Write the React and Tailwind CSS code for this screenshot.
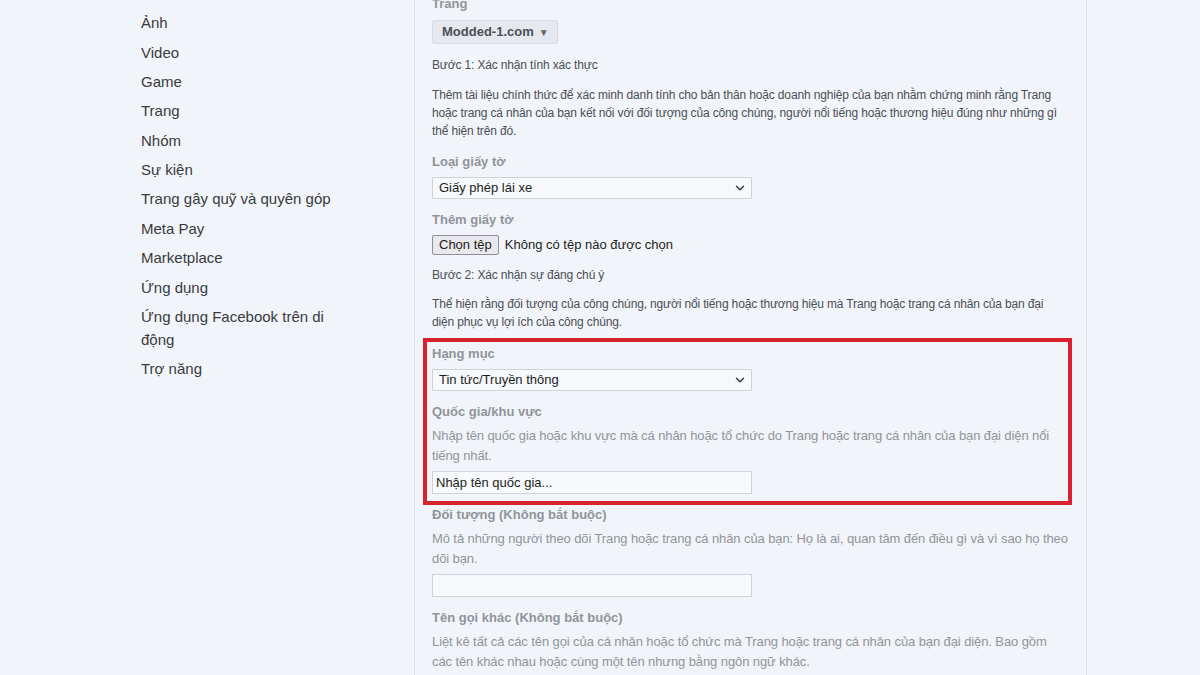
import { ChevronDown } from 'lucide-react';

const sideItems = [
  'Ảnh',
  'Video',
  'Game',
  'Trang',
  'Nhóm',
  'Sự kiện',
  'Trang gây quỹ và quyên góp',
  'Meta Pay',
  'Marketplace',
  'Ứng dụng',
  'Ứng dụng Facebook trên di động',
  'Trợ năng',
];

export default function App() {
  return (
    <div className="flex h-[675px] w-[1200px] overflow-hidden bg-[#f1f4f9] font-['Liberation_Sans',Arial,sans-serif]">
      <aside className="w-[414px] shrink-0 pl-[141px] pt-[8px]">
        <ul className="w-[200px] text-[15px] leading-[23px] text-[#3a3b3e]">
          {sideItems.map((item) => (
            <li key={item} className="py-[3.2px]">{item}</li>
          ))}
        </ul>
      </aside>

      <main className="w-[673px] shrink-0 border-x border-[#dde1e7] px-[17px]">
        <div className="-mt-[4px] w-[637px]">
          <Label>Trang</Label>
          <button className="mt-[8px] flex h-[24px] items-center gap-[5px] rounded-[2px] border border-[#dadde3] bg-[#e5e8ee] pl-[9px] pr-[8px] text-[13px] font-bold text-[#4b4f56]">
            Modded-1.com
            <span className="text-[10px] text-[#606770]">▼</span>
          </button>

          <p className="mt-[13px] text-[12px] leading-[16px] tracking-[-0.15px] text-[#4b4f56]">Bước 1: Xác nhận tính xác thực</p>
          <p className="mt-[13px] text-[12px] leading-[18px] tracking-[-0.15px] text-[#4b4f56]">
            Thêm tài liệu chính thức để xác minh danh tính cho bản thân hoặc doanh nghiệp của bạn nhằm chứng minh rằng Trang hoặc trang cá nhân của bạn kết nối với đối tượng của công chúng, người nổi tiếng hoặc thương hiệu đúng như những gì thể hiện trên đó.
          </p>

          <div className="mt-[14px]">
            <Label>Loại giấy tờ</Label>
            <Select value="Giấy phép lái xe" />
          </div>

          <div className="mt-[13px]">
            <Label>Thêm giấy tờ</Label>
            <div className="mt-[7px] flex items-center gap-[6px] text-[13px] text-[#1c1e21]">
              <span className="flex h-[20px] items-center rounded-[2px] border border-[#8f8f9d] bg-[#e9e9ed] px-[6px]">Chọn tệp</span>
              <span>Không có tệp nào được chọn</span>
            </div>
          </div>

          <p className="mt-[12px] text-[12px] leading-[16px] tracking-[-0.15px] text-[#4b4f56]">Bước 2: Xác nhận sự đáng chú ý</p>
          <p className="mt-[12px] w-[621px] text-[12px] leading-[18px] tracking-[-0.15px] text-[#4b4f56]">
            Thể hiện rằng đối tượng của công chúng, người nổi tiếng hoặc thương hiệu mà Trang hoặc trang cá nhân của bạn đại diện phục vụ lợi ích của công chúng.
          </p>

          <div className="relative mt-[15px]">
            <div className="pointer-events-none absolute -top-[8px] -bottom-[11px] -left-[9px] w-[649px] border-4 border-[#d9222f]" />
            <Label>Hạng mục</Label>
            <Select value="Tin tức/Truyền thông" />

            <div className="mt-[13px]">
              <Label>Quốc gia/khu vực</Label>
              <Hint>
                Nhập tên quốc gia hoặc khu vực mà cá nhân hoặc tổ chức do Trang hoặc trang cá nhân của bạn đại diện nổi tiếng nhất.
              </Hint>
              <Input placeholder="Nhập tên quốc gia..." />
            </div>
          </div>

          <div className="mt-[13px]">
            <Label>Đối tượng (Không bắt buộc)</Label>
            <Hint>
              Mô tả những người theo dõi Trang hoặc trang cá nhân của bạn: Họ là ai, quan tâm đến điều gì và vì sao họ theo dõi bạn.
            </Hint>
            <Input />
          </div>

          <div className="mt-[13px]">
            <Label>Tên gọi khác (Không bắt buộc)</Label>
            <Hint>
              Liệt kê tất cả các tên gọi của cá nhân hoặc tổ chức mà Trang hoặc trang cá nhân của bạn đại diện. Bao gồm các tên khác nhau hoặc cùng một tên nhưng bằng ngôn ngữ khác.
            </Hint>
          </div>
        </div>
      </main>
    </div>
  );
}

function Label({ children }) {
  return <div className="text-[13px] font-bold leading-[16px] text-[#90949c]">{children}</div>;
}

function Hint({ children }) {
  return (
    <p className="mt-[6px] text-[13px] leading-[19.5px] tracking-[-0.1px] text-[#90949c]">{children}</p>
  );
}

function Select({ value }) {
  return (
    <div className="mt-[7px] flex h-[22px] w-[320px] items-center justify-between border border-[#cfd3d9] bg-[#f6f8fb] pl-[6px] pr-[4px] text-[13px] text-[#1c1e21]">
      <span>{value}</span>
      <ChevronDown size={14} strokeWidth={2.5} className="text-[#3a3b3e]" />
    </div>
  );
}

function Input({ placeholder }) {
  return (
    <div className="mt-[6px] flex h-[23px] w-[320px] items-center border border-[#cfd3d9] bg-[#f7f9fc] px-[3px] text-[13px] text-[#1c1e21]">
      {placeholder}
    </div>
  );
}
